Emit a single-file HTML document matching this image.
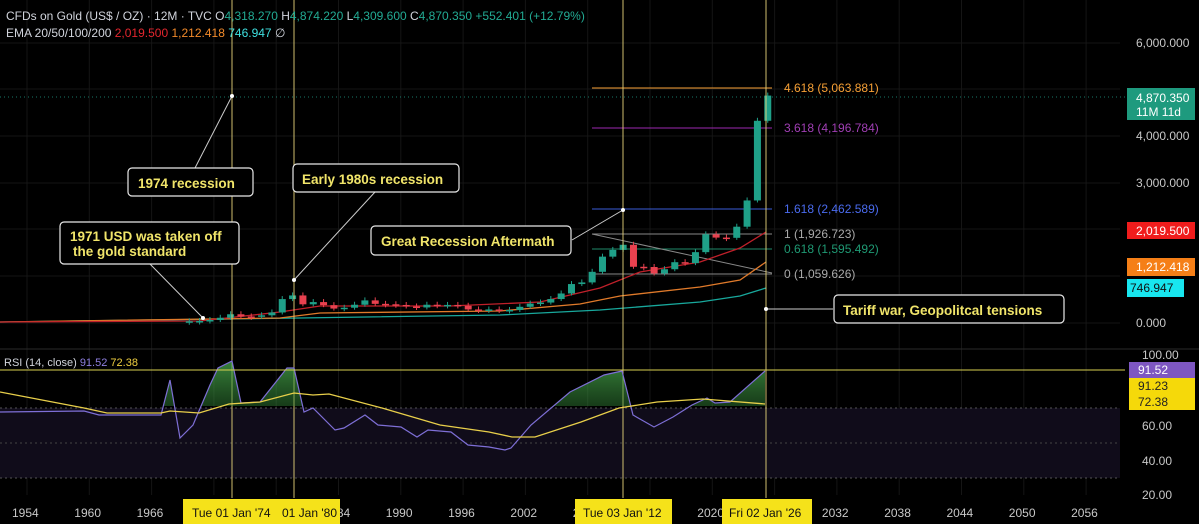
<!DOCTYPE html>
<html><head><meta charset="utf-8"><style>
html,body{margin:0;padding:0;background:#000;width:1199px;height:524px;overflow:hidden}
svg{display:block;font-family:"Liberation Sans",sans-serif}
</style></head><body>
<svg id="s" width="1199" height="524" viewBox="0 0 1199 524" xmlns="http://www.w3.org/2000/svg">
<defs>
<linearGradient id="gg" x1="0" y1="0" x2="0" y2="1"><stop offset="0" stop-color="#4caf50" stop-opacity="0.75"/><stop offset="1" stop-color="#1b5e20" stop-opacity="0.15"/></linearGradient>
<clipPath id="top70"><rect x="0" y="340" width="1120" height="66"/></clipPath>
</defs>
<rect width="1199" height="524" fill="#000"/>
<g id="grid" stroke="#151515" stroke-width="1"></g>
<rect x="0" y="408" width="1120" height="70" fill="#100c1a"/>
<line x1="0" y1="408" x2="1120" y2="408" stroke="#555" stroke-dasharray="2,3"/>
<line x1="0" y1="443" x2="1120" y2="443" stroke="#444" stroke-dasharray="2,3"/>
<line x1="0" y1="478" x2="1120" y2="478" stroke="#555" stroke-dasharray="2,3"/>
<line x1="0" y1="349" x2="1199" y2="349" stroke="#2a2a2a"/>
<line x1="0" y1="97" x2="1125" y2="97" stroke="#22ab94" stroke-dasharray="1,3" opacity="0.7"/>
<g stroke-width="1">
<line x1="592" y1="88" x2="772" y2="88" stroke="#f7a035"/>
<line x1="592" y1="128" x2="772" y2="128" stroke="#9c27b0"/>
<line x1="592" y1="209" x2="772" y2="209" stroke="#3a5bd9"/>
<line x1="592" y1="234" x2="772" y2="234" stroke="#888"/>
<line x1="592" y1="249" x2="772" y2="249" stroke="#1f8a6a"/>
<line x1="592" y1="274" x2="772" y2="274" stroke="#888"/>
<line x1="592" y1="234" x2="772" y2="273" stroke="#888"/>
</g>
<g font-size="12">
<text x="784" y="92" fill="#f7a035">4.618 (5,063.881)</text>
<text x="784" y="132" fill="#a13fb5">3.618 (4,196.784)</text>
<text x="784" y="213" fill="#4a6bef">1.618 (2,462.589)</text>
<text x="784" y="238" fill="#aaa">1 (1,926.723)</text>
<text x="784" y="253" fill="#1f9a74">0.618 (1,595.492)</text>
<text x="784" y="278" fill="#aaa">0 (1,059.626)</text>
</g>
<polyline fill="none" stroke="#18a89c" stroke-width="1.3" points="0,322 300,318 500,315 600,310 700,302 740,296 766,288"/>
<polyline fill="none" stroke="#e07a2a" stroke-width="1.3" points="0,322 280,318 320,313 500,311 580,304 620,296 700,287 740,280 766,262"/>
<polyline fill="none" stroke="#c0202a" stroke-width="1.3" points="0,322 200,321 280,312 320,306 450,306 540,302 600,288 640,272 700,262 740,248 766,232"/>
<g id="candles"></g>
<g stroke="#e6d37a" stroke-width="1" opacity="0.9">
<line x1="232" y1="0" x2="232" y2="498"/><line x1="294" y1="0" x2="294" y2="498"/>
<line x1="623" y1="0" x2="623" y2="498"/><line x1="766" y1="0" x2="766" y2="498"/>
</g>
<g stroke="#ccc" stroke-width="1">
<line x1="195" y1="168" x2="232" y2="96"/><line x1="375" y1="192" x2="294" y2="280"/>
<line x1="150" y1="264" x2="203" y2="318"/><line x1="572" y1="240" x2="623" y2="210"/>
<line x1="833" y1="309" x2="766" y2="309"/>
</g>
<g fill="#fff"><circle cx="232" cy="96" r="2"/><circle cx="294" cy="280" r="2"/><circle cx="203" cy="318" r="2"/><circle cx="623" cy="210" r="2"/><circle cx="766" cy="309" r="2"/></g>
<g fill="#000" stroke="#e8e8e8" stroke-width="1.2">
<rect x="128" y="168" width="125" height="28" rx="4"/>
<rect x="293" y="164" width="166" height="28" rx="4"/>
<rect x="60" y="222" width="179" height="42" rx="4"/>
<rect x="371" y="226" width="200" height="29" rx="4"/>
<rect x="834" y="295" width="230" height="28" rx="4"/>
</g>
<g fill="#f1e56a" font-size="13.5" font-weight="bold">
<text x="138" y="188">1974 recession</text>
<text x="302" y="184">Early 1980s recession</text>
<text x="70" y="241">1971 USD was taken off</text>
<text x="73" y="256">the gold standard</text>
<text x="381" y="246">Great Recession Aftermath</text>
<text x="843" y="315">Tariff war, Geopolitcal tensions</text>
</g>
<polygon id="rsifill" clip-path="url(#top70)" fill="url(#gg)"/>
<polyline id="rsi" fill="none" stroke="#7e6fd6" stroke-width="1.2"/>
<polyline fill="none" stroke="#e8cf4a" stroke-width="1.3" points="0,392 84,408 107,413 161,413 170,411 199,413 229,404 260,402 294,393 313,395 329,394 382,408 440,425 489,432 512,437 535,437 581,422 619,408 657,402 703,399 765,404"/>
<line x1="0" y1="370" x2="1125" y2="370" stroke="#d8d050" stroke-width="1"/>
<g font-size="12" fill="#d1d4dc">
<text x="6" y="20">CFDs on Gold (US$ / OZ) · 12M · TVC  O<tspan fill="#22ab94">4,318.270</tspan>  H<tspan fill="#22ab94">4,874.220</tspan>  L<tspan fill="#22ab94">4,309.600</tspan>  C<tspan fill="#22ab94">4,870.350 +552.401 (+12.79%)</tspan></text>
<text x="6" y="37">EMA 20/50/100/200  <tspan fill="#e3262e">2,019.500</tspan>  <tspan fill="#f28a2a">1,212.418</tspan>  <tspan fill="#3fe0e0">746.947</tspan>  ∅</text>
<text x="4" y="366" font-size="11">RSI (14, close)  <tspan fill="#8e7fe0">91.52</tspan>  <tspan fill="#f0d040">72.38</tspan></text>
</g>
<g font-size="12" fill="#c8c8c8">
<text x="1136" y="47">6,000.000</text>
<text x="1136" y="140">4,000.000</text>
<text x="1136" y="187">3,000.000</text>
<text x="1136" y="327">0.000</text>
<text x="1142" y="359">100.00</text>
<text x="1142" y="430">60.00</text>
<text x="1142" y="465">40.00</text>
<text x="1142" y="499">20.00</text>
</g>
<rect x="1127" y="88" width="68" height="32" fill="#1e9a7e"/>
<text x="1136" y="102" font-size="12" fill="#fff">4,870.350</text>
<text x="1136" y="116" font-size="12" fill="#fff">11M 11d</text>
<rect x="1127" y="222" width="68" height="17" fill="#f01c1c"/><text x="1136" y="235" font-size="12" fill="#fff">2,019.500</text>
<rect x="1127" y="258" width="68" height="18" fill="#f57f17"/><text x="1136" y="271" font-size="12" fill="#fff">1,212.418</text>
<rect x="1127" y="279" width="57" height="18" fill="#18e6ef"/><text x="1130" y="292" font-size="12" fill="#111">746.947</text>
<rect x="1129" y="362" width="66" height="16" fill="#7e57c2"/><text x="1138" y="374" font-size="12" fill="#fff">91.52</text>
<rect x="1129" y="378" width="66" height="32" fill="#f5d90a"/><text x="1138" y="390" font-size="12" fill="#222">91.23</text><text x="1138" y="406" font-size="12" fill="#222">72.38</text>
<g font-size="12" fill="#c8c8c8" id="tax"></g>
<rect x="183" y="499" width="103" height="25" fill="#f5e21a"/>
<rect x="282" y="499" width="58" height="25" fill="#f5e21a"/>
<rect x="575" y="499" width="97" height="25" fill="#f5e21a"/>
<rect x="722" y="499" width="90" height="25" fill="#f5e21a"/>
<g font-size="12" fill="#111">
<text x="192" y="517">Tue 01 Jan '74</text><text x="282" y="517">01 Jan '80</text>
<text x="583" y="517">Tue 03 Jan '12</text><text x="729" y="517">Fri 02 Jan '26</text>
</g>
</svg>
<script>
var NS="http://www.w3.org/2000/svg";
function el(t,a,p){var e=document.createElementNS(NS,t);for(var k in a)e.setAttribute(k,a[k]);p.appendChild(e);return e;}
var g=document.getElementById('grid');
for(var i=0;i<18;i++){var x=27+i*62.3;el('line',{x1:x,y1:0,x2:x,y2:495},g);}
[43,89,136,183,229,276,323].forEach(function(y){el('line',{x1:0,y1:y,x2:1120,y2:y},g);});
var tx=document.getElementById('tax');
[1954,1960,1966,1972,1978,1984,1990,1996,2002,2008,2014,2020,2026,2032,2038,2044,2050,2056].forEach(function(y,i){var t=el('text',{x:12+i*62.3,y:517},tx);t.textContent=y;});
var d=[[1970,35,37],[1971,37,43],[1972,43,64],[1973,64,112],[1974,112,187],[1975,187,140],[1976,140,135],[1977,135,165],[1978,165,226],[1979,226,512],[1980,512,590],[1981,590,400],[1982,400,448],[1983,448,382],[1984,382,309],[1985,309,327],[1986,327,391],[1987,391,484],[1988,484,410],[1989,410,401],[1990,401,386],[1991,386,353],[1992,353,333],[1993,333,391],[1994,391,383],[1995,383,387],[1996,387,369],[1997,369,290],[1998,290,288],[1999,288,290],[2000,290,273],[2001,273,279],[2002,279,347],[2003,347,416],[2004,416,438],[2005,438,513],[2006,513,632],[2007,632,834],[2008,834,869],[2009,869,1096],[2010,1096,1421],[2011,1421,1565],[2012,1565,1675],[2013,1675,1204],[2014,1204,1199],[2015,1199,1061],[2016,1061,1151],[2017,1151,1302],[2018,1302,1282],[2019,1282,1517],[2020,1517,1898],[2021,1898,1829],[2022,1829,1824],[2023,1824,2062],[2024,2062,2624],[2025,2624,4330],[2026,4330,4870]];
var c=document.getElementById('candles');
function Y(p){return 323-p*0.0467;}
d.forEach(function(r){var x=24+(r[0]-1954)*10.33;var o=Y(r[1]),cl=Y(r[2]);var up=r[2]>=r[1];var col=up?'#1fa088':'#e8414f';
var top=Math.min(o,cl),h=Math.max(1.5,Math.abs(o-cl));
el('line',{x1:x,y1:top-3,x2:x,y2:top+h+2,stroke:col},c);
el('rect',{x:x-3.5,y:top,width:7,height:h,fill:col},c);});
var pts=[[0,412],[84,411],[99,415],[161,415],[170,380],[180,438],[193,425],[210,385],[218,368],[232,361],[241,403],[260,402],[287,368],[294,368],[304,412],[313,408],[335,430],[344,428],[365,415],[378,425],[401,427],[417,437],[428,430],[451,432],[468,445],[489,447],[505,450],[511,448],[531,425],[570,392],[604,375],[622,371],[633,415],[654,427],[673,417],[692,405],[707,398],[715,403],[730,402],[765,371]];
var s=pts.map(function(p){return p.join(',')}).join(' ');
document.getElementById('rsi').setAttribute('points',s);
document.getElementById('rsifill').setAttribute('points',s+' 765,406 0,406');
</script>
</body></html>
